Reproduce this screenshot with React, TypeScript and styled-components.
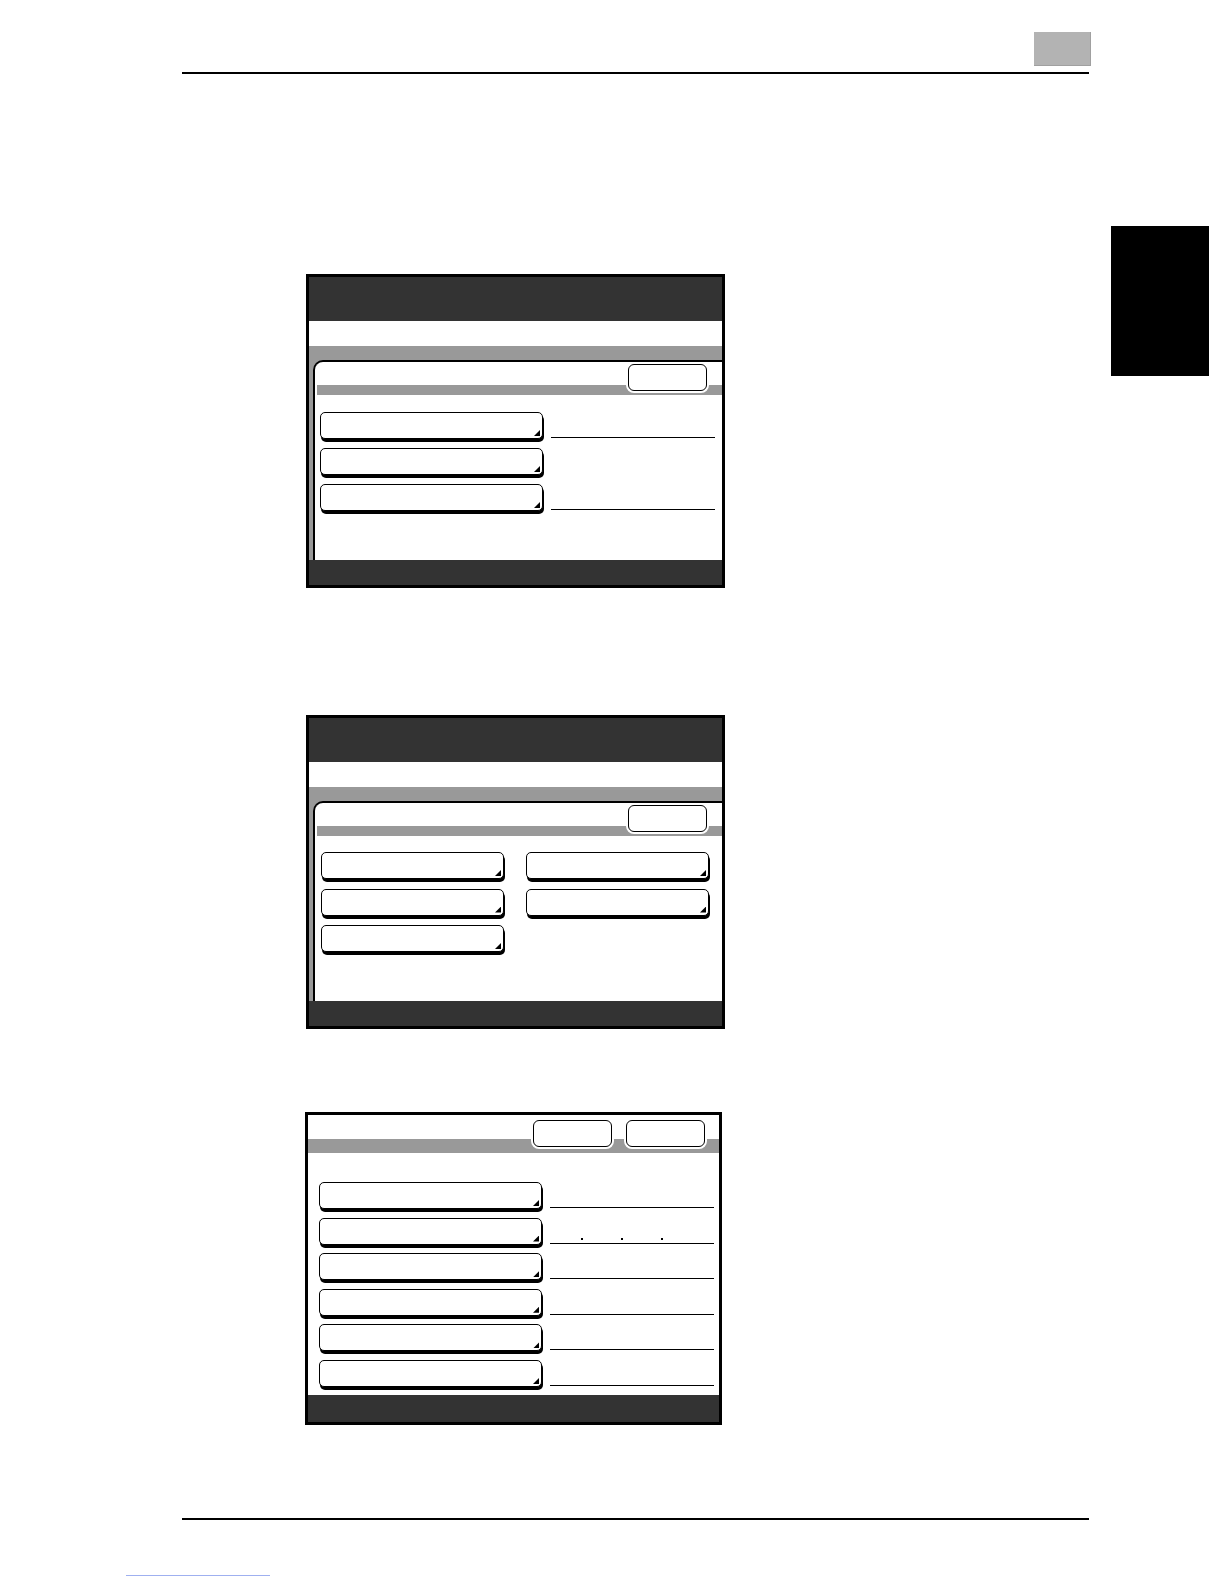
import styled, { createGlobalStyle } from "styled-components";

const GlobalStyle = createGlobalStyle`
  html, body {
    margin: 0;
    padding: 0;
    background: #fff;
  }
  body {
    font-family: "Liberation Sans", Arial, sans-serif;
  }
  * {
    box-sizing: border-box;
  }
`;

const Page = styled.div`
  width: 1224px;
  height: 1584px;
  overflow: hidden;
  background: #fff;
`;

const Header = styled.header`
  margin-left: 182px;
  width: 907px;
  height: 74px;
  padding-top: 32px;
  display: flex;
  justify-content: flex-end;
  align-items: flex-start;
  border-bottom: 2px solid #000;
`;

const ChapterBox = styled.div`
  width: 57px;
  height: 34px;
  margin-right: -2px;
  background: #b3b3b3;
  box-shadow: inset -1px -1px 0 #a0a0a0;
`;

const ContentRow = styled.div`
  display: flex;
`;

const MainColumn = styled.main`
  width: 1111px;
  padding: 200px 0 0 306px;
  display: flex;
  flex-direction: column;
`;

const SideColumn = styled.aside`
  padding-top: 152px;
`;

const SideTab = styled.div`
  width: 98px;
  height: 150px;
  background: #000;
`;

const Screen = styled.section<{ $width: number; $gap: number; $shift?: number }>`
  width: ${(p) => p.$width}px;
  margin-bottom: ${(p) => p.$gap}px;
  margin-left: ${(p) => p.$shift ?? 0}px;
  border: 3px solid #000;
  display: flex;
  flex-direction: column;
  background: #fff;
`;

const TitleBar = styled.div`
  height: 44px;
  background: #333;
`;

const MessageStrip = styled.div`
  height: 25px;
  background: #fff;
`;

const TabBand = styled.div`
  height: 14px;
  background: #999;
`;

const ScreenBody = styled.div`
  height: 200px;
  display: flex;
  padding-left: 4px;
  background: #999;
`;

const Sheet = styled.div`
  flex: 1;
  display: flex;
  flex-direction: column;
  background: #fff;
  border-top: 2px solid #000;
  border-left: 2px solid #000;
  border-top-left-radius: 10px;
`;

const SheetHeader = styled.div`
  height: 33px;
  display: flex;
  justify-content: flex-end;
  align-items: flex-start;
  padding: 2px 15px 0 0;
  background: linear-gradient(#999, #999) no-repeat right bottom / calc(100% - 2px) 10px;
`;

const PlainHeader = styled.div`
  height: 38px;
  display: flex;
  justify-content: flex-end;
  align-items: flex-start;
  gap: 14px;
  padding: 5px 14px 0 0;
  background: linear-gradient(#999, #999) no-repeat left bottom / 100% 14px;
`;

const PlainBody = styled.div`
  height: 242px;
  padding: 29px 0 0 11px;
  display: flex;
  flex-direction: column;
  gap: 8.6px;
`;

const SoftButton = styled.div`
  width: 79px;
  height: 27px;
  border: 1.5px solid #000;
  border-radius: 6px;
  background: #fff;
  box-shadow: 0 0 0 2px #fff;
`;

const StatusBar = styled.div<{ $height: number }>`
  height: ${(p) => p.$height}px;
  background: #333;
`;

const KeyList = styled.div<{ $top: number; $left: number; $gap: number }>`
  display: flex;
  flex-direction: column;
  gap: ${(p) => p.$gap}px;
  padding: ${(p) => p.$top}px 0 0 ${(p) => p.$left}px;
`;

const KeyGrid = styled.div`
  display: grid;
  grid-template-columns: 183px 183px;
  column-gap: 22px;
  row-gap: 9.5px;
  padding: 16px 0 0 6px;
`;

const KeyRow = styled.div<{ $gap: number }>`
  display: flex;
  align-items: flex-end;
  gap: ${(p) => p.$gap}px;
`;

const Key = styled.div<{ $width: number }>`
  width: ${(p) => p.$width}px;
  height: 27px;
  border: 1.5px solid #000;
  border-radius: 5px;
  background: #fff;
  box-shadow: 1px 3px 0 #000;
  display: flex;
  justify-content: flex-end;
  align-items: flex-end;
  padding: 0 2px 2px 0;
`;

const Corner = styled.span`
  width: 6px;
  height: 6px;
  background: #000;
  clip-path: polygon(100% 0, 100% 100%, 0 100%);
`;

const Rule = styled.div<{ $show: boolean }>`
  width: 164px;
  height: 10px;
  margin-bottom: 1px;
  display: flex;
  align-items: flex-end;
  gap: 38px;
  padding: 0 0 3px 31px;
  border-bottom: 1.5px solid ${(p) => (p.$show ? "#000" : "transparent")};
`;

const Dot = styled.span`
  width: 2px;
  height: 2px;
  background: #000;
`;

const FooterRule = styled.footer`
  margin: 93px 0 0 182px;
  width: 907px;
  border-top: 2px solid #000;
`;

const PageLink = styled.div`
  margin: 55px 0 0 126px;
  width: 144px;
  height: 1px;
  background: #9fb0f0;
`;

function KeyButton({ width }: { width: number }) {
  return (
    <Key $width={width}>
      <Corner />
    </Key>
  );
}

const firstRules = [true, false, true];
const lastRules = [0, 3, 0, 0, 0, 0];

function App() {
  return (
    <Page>
      <GlobalStyle />
      <Header>
        <ChapterBox />
      </Header>
      <ContentRow>
        <MainColumn>
          <Screen $width={419} $gap={127}>
            <TitleBar />
            <MessageStrip />
            <TabBand />
            <ScreenBody>
              <Sheet>
                <SheetHeader>
                  <SoftButton />
                </SheetHeader>
                <KeyList $top={17} $left={5} $gap={9}>
                  {firstRules.map((show, i) => (
                    <KeyRow key={i} $gap={8}>
                      <KeyButton width={223} />
                      <Rule $show={show} />
                    </KeyRow>
                  ))}
                </KeyList>
              </Sheet>
            </ScreenBody>
            <StatusBar $height={25} />
          </Screen>

          <Screen $width={419} $gap={83}>
            <TitleBar />
            <MessageStrip />
            <TabBand />
            <ScreenBody>
              <Sheet>
                <SheetHeader>
                  <SoftButton />
                </SheetHeader>
                <KeyGrid>
                  {[0, 1, 2, 3, 4].map((i) => (
                    <KeyButton key={i} width={183} />
                  ))}
                </KeyGrid>
              </Sheet>
            </ScreenBody>
            <StatusBar $height={25} />
          </Screen>

          <Screen $width={417} $gap={0} $shift={-1}>
            <PlainHeader>
              <SoftButton />
              <SoftButton />
            </PlainHeader>
            <PlainBody>
              {lastRules.map((dots, i) => (
                <KeyRow key={i} $gap={8}>
                  <KeyButton width={223} />
                  <Rule $show>
                    {Array.from({ length: dots }).map((_, d) => (
                      <Dot key={d} />
                    ))}
                  </Rule>
                </KeyRow>
              ))}
            </PlainBody>
            <StatusBar $height={27} />
          </Screen>
        </MainColumn>
        <SideColumn>
          <SideTab />
        </SideColumn>
      </ContentRow>
      <FooterRule />
      <PageLink />
    </Page>
  );
}

export default App;
